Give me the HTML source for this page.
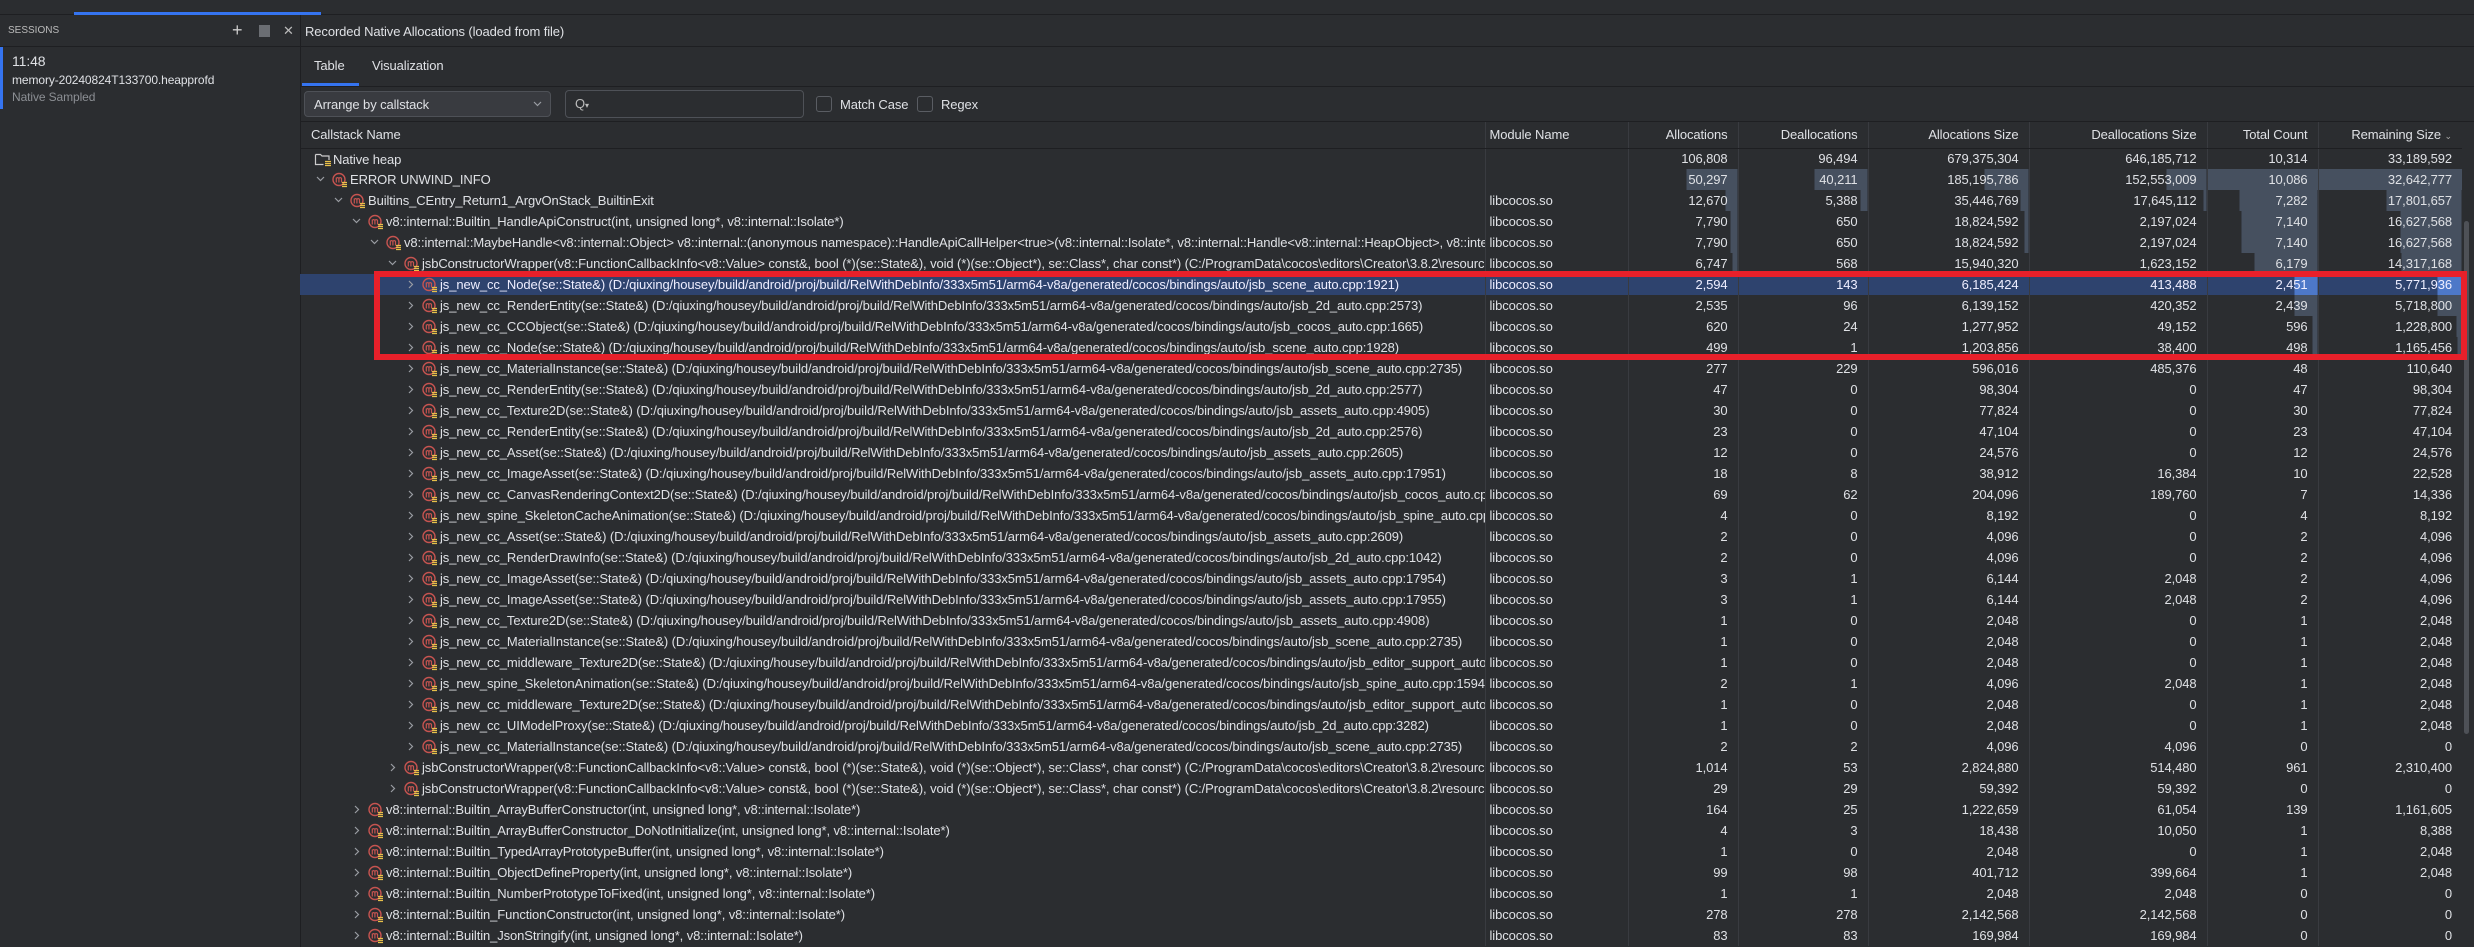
<!DOCTYPE html>
<html><head><meta charset="utf-8">
<style>
*{box-sizing:border-box;margin:0;padding:0}
body{width:2474px;height:947px;background:#2b2d30;color:#dfe1e5;font-family:"Liberation Sans",sans-serif;font-size:13px;letter-spacing:-0.1px;overflow:hidden;position:relative}
.a{position:absolute;white-space:nowrap}
table{position:absolute;left:300px;top:122px;width:2162px;border-collapse:collapse;table-layout:fixed}
td,th{height:21px;padding:0 10px 0 0;text-align:right;font-weight:normal;white-space:nowrap;overflow:hidden;border-left:1px solid #393b40}
th{height:26px;border-bottom:1px solid #1e1f22;color:#dfe1e5}
td:first-child,th:first-child{border-left:none;text-align:left;padding:0;position:relative}
td:nth-child(2),th:nth-child(2){text-align:left;padding-left:4px}
tr.sel td{background:#2e436e;color:#eef}
.n{position:absolute;top:0;height:21px;display:flex;align-items:center;white-space:nowrap}
.n svg{flex:none}
.ch{position:absolute;top:7px}
</style></head><body>
<svg width="0" height="0" style="position:absolute">
<defs>
<symbol id="m" viewBox="0 0 16 16"><circle cx="7" cy="7.5" r="6" fill="none" stroke="#c75450" stroke-width="1.4"/><path d="M4.3 10.5V5.5M4.3 6.3q1.3-1.4 2.6 0V10.5M6.9 6.3q1.3-1.4 2.6 0V10.5" fill="none" stroke="#c75450" stroke-width="1.2"/><path d="M10 10.5h5M10 12.5h5M10 14.5h5" stroke="#e8c04a" stroke-width="1.2"/></symbol>
<symbol id="f" viewBox="0 0 18 16"><path d="M1.5 3.5h5l1.5 1.5h7v4M1.5 3.5v10h8" fill="none" stroke="#ccc" stroke-width="1.2"/><path d="M11 10.5h6M11 12.5h6M11 14.5h6" stroke="#e8c04a" stroke-width="1.2"/></symbol>
<symbol id="d" viewBox="0 0 9 6"><path d="M1 1l3.5 3.5L8 1" fill="none" stroke="#9a9da3" stroke-width="1.2"/></symbol>
<symbol id="r" viewBox="0 0 6 9"><path d="M1 1l3.5 3.5L1 8" fill="none" stroke="#9a9da3" stroke-width="1.2"/></symbol>
</defs></svg>

<div class="a" style="left:0;top:0;width:2474px;height:15px;background:#2b2d30;border-bottom:1px solid #1e1f22"></div>
<div class="a" style="left:74px;top:12px;width:247px;height:3px;background:#3574f0"></div>

<div class="a" style="left:0;top:15px;width:301px;height:932px;border-right:1px solid #1e1f22"></div>
<div class="a" style="left:0;top:46px;width:301px;height:1px;background:#1e1f22"></div>
<div class="a" style="left:8px;top:25px;font-size:10px;color:#bbb;letter-spacing:0">SESSIONS</div>
<div class="a" style="left:232px;top:21px;font-size:18px;color:#ccc;line-height:18px">+</div>
<div class="a" style="left:259px;top:25px;width:11px;height:12px;background:#6b6e73"></div>
<div class="a" style="left:283px;top:23px;font-size:13px;color:#bbb">✕</div>
<div class="a" style="left:0;top:47px;width:3px;height:62px;background:#3574f0"></div>
<div class="a" style="left:12px;top:53px;font-size:14px;color:#dfe1e5">11:48</div>
<div class="a" style="left:12px;top:73px;font-size:12px;color:#dfe1e5">memory-20240824T133700.heapprofd</div>
<div class="a" style="left:12px;top:90px;font-size:12px;color:#8c8f94">Native Sampled</div>

<div class="a" style="left:305px;top:24px;font-size:13px;color:#dfe1e5">Recorded Native Allocations (loaded from file)</div>
<div class="a" style="left:301px;top:46px;width:2173px;height:1px;background:#1e1f22"></div>
<div class="a" style="left:314px;top:58px;font-size:13px">Table</div>
<div class="a" style="left:372px;top:58px;font-size:13px">Visualization</div>
<div class="a" style="left:302px;top:83px;width:57px;height:3px;background:#3574f0"></div>
<div class="a" style="left:301px;top:86px;width:2173px;height:1px;background:#1e1f22"></div>
<div class="a" style="left:304px;top:91px;width:247px;height:26px;background:#393b40;border:1px solid #4e5157;border-radius:4px"></div>
<div class="a" style="left:314px;top:97px;font-size:13px">Arrange by callstack</div>
<svg class="a" style="left:533px;top:101px" width="9" height="6"><use href="#d"/></svg>
<div class="a" style="left:565px;top:90px;width:239px;height:28px;border:1px solid #4e5157;border-radius:4px"></div>
<div class="a" style="left:575px;top:96px;font-size:13px;color:#bbb">Q<span style="font-size:8px">▾</span></div>
<div class="a" style="left:816px;top:96px;width:16px;height:16px;border:1px solid #5a5d63;border-radius:3px"></div>
<div class="a" style="left:840px;top:97px;font-size:13px">Match Case</div>
<div class="a" style="left:917px;top:96px;width:16px;height:16px;border:1px solid #5a5d63;border-radius:3px"></div>
<div class="a" style="left:941px;top:97px;font-size:13px">Regex</div>
<div class="a" style="left:301px;top:121px;width:2173px;height:1px;background:#1e1f22"></div>

<div class="a" style="left:2464px;top:221px;width:5px;height:513px;background:#4e5157;border-radius:3px"></div>

<table>
<colgroup><col style="width:1185px"><col style="width:143px"><col style="width:110px"><col style="width:130px"><col style="width:161px"><col style="width:178px"><col style="width:111px"><col style="width:144px"></colgroup>
<tr><th><span style="padding-left:11px">Callstack Name</span></th><th>Module Name</th><th>Allocations</th><th>Deallocations</th><th>Allocations Size</th><th>Deallocations Size</th><th>Total Count</th><th>Remaining Size <span style="font-size:9px;color:#aaa">⌄</span></th></tr>

<tr><td><div class="n" style="left:14px"><svg width="18" height="16"><use href="#f"/></svg><span style="margin-left:1px">Native heap</span></div></td><td></td><td>106,808</td><td>96,494</td><td>679,375,304</td><td>646,185,712</td><td>10,314</td><td>33,189,592</td></tr>

<tr><td><svg class="ch" style="left:16px" width="9" height="6"><use href="#d"/></svg><div class="n" style="left:32px"><svg width="16" height="16"><use href="#m"/></svg><span style="margin-left:2px">ERROR UNWIND_INFO</span></div></td><td></td><td style="background:linear-gradient(to left,#46505f 51px,transparent 51px)">50,297</td><td style="background:linear-gradient(to left,#46505f 53px,transparent 53px)">40,211</td><td style="background:linear-gradient(to left,#46505f 44px,transparent 44px)">185,195,786</td><td style="background:linear-gradient(to left,#46505f 40px,transparent 40px)">152,553,009</td><td style="background:#46505f">10,086</td><td style="background:#46505f">32,642,777</td></tr>

<tr><td><svg class="ch" style="left:34px" width="9" height="6"><use href="#d"/></svg><div class="n" style="left:50px"><svg width="16" height="16"><use href="#m"/></svg><span style="margin-left:2px">Builtins_CEntry_Return1_ArgvOnStack_BuiltinExit</span></div></td><td>libcocos.so</td><td style="background:linear-gradient(to left,#46505f 12px,transparent 12px)">12,670</td><td style="background:linear-gradient(to left,#46505f 7px,transparent 7px)">5,388</td><td style="background:linear-gradient(to left,#46505f 8px,transparent 8px)">35,446,769</td><td style="background:linear-gradient(to left,#46505f 3px,transparent 3px)">17,645,112</td><td style="background:linear-gradient(to left,#46505f 78px,transparent 78px)">7,282</td><td style="background:linear-gradient(to left,#46505f 75px,transparent 75px)">17,801,657</td></tr>

<tr><td><svg class="ch" style="left:52px" width="9" height="6"><use href="#d"/></svg><div class="n" style="left:68px"><svg width="16" height="16"><use href="#m"/></svg><span style="margin-left:2px">v8::internal::Builtin_HandleApiConstruct(int, unsigned long*, v8::internal::Isolate*)</span></div></td><td>libcocos.so</td><td style="background:linear-gradient(to left,#46505f 7px,transparent 7px)">7,790</td><td>650</td><td style="background:linear-gradient(to left,#46505f 4px,transparent 4px)">18,824,592</td><td>2,197,024</td><td style="background:linear-gradient(to left,#46505f 76px,transparent 76px)">7,140</td><td style="background:linear-gradient(to left,#46505f 61px,transparent 61px)">16,627,568</td></tr>

<tr><td><svg class="ch" style="left:70px" width="9" height="6"><use href="#d"/></svg><div class="n" style="left:86px"><svg width="16" height="16"><use href="#m"/></svg><span style="margin-left:2px">v8::internal::MaybeHandle&lt;v8::internal::Object&gt; v8::internal::(anonymous namespace)::HandleApiCallHelper&lt;true&gt;(v8::internal::Isolate*, v8::internal::Handle&lt;v8::internal::HeapObject&gt;, v8::internal::Handle&lt;v8::internal::FunctionTemplateInfo&gt;)</span></div></td><td>libcocos.so</td><td style="background:linear-gradient(to left,#46505f 7px,transparent 7px)">7,790</td><td>650</td><td style="background:linear-gradient(to left,#46505f 4px,transparent 4px)">18,824,592</td><td>2,197,024</td><td style="background:linear-gradient(to left,#46505f 76px,transparent 76px)">7,140</td><td style="background:linear-gradient(to left,#46505f 61px,transparent 61px)">16,627,568</td></tr>

<tr><td><svg class="ch" style="left:88px" width="9" height="6"><use href="#d"/></svg><div class="n" style="left:104px"><svg width="16" height="16"><use href="#m"/></svg><span style="margin-left:2px">jsbConstructorWrapper(v8::FunctionCallbackInfo&lt;v8::Value&gt; const&amp;, bool (*)(se::State&amp;), void (*)(se::Object*), se::Class*, char const*) (C:/ProgramData\cocos\editors\Creator\3.8.2\resources\resources\3d\engine\native\cocos\bindings\jswrapper\v8\HelperMacros.h)</span></div></td><td>libcocos.so</td><td style="background:linear-gradient(to left,#46505f 5px,transparent 5px)">6,747</td><td>568</td><td>15,940,320</td><td>1,623,152</td><td style="background:linear-gradient(to left,#46505f 63px,transparent 63px)">6,179</td><td style="background:linear-gradient(to left,#46505f 60px,transparent 60px)">14,317,168</td></tr>

<tr class="sel"><td><svg class="ch" style="left:108px;top:6px" width="6" height="9"><use href="#r"/></svg><div class="n" style="left:122px"><svg width="16" height="16"><use href="#m"/></svg><span style="margin-left:2px">js_new_cc_Node(se::State&amp;) (D:/qiuxing/housey/build/android/proj/build/RelWithDebInfo/333x5m51/arm64-v8a/generated/cocos/bindings/auto/jsb_scene_auto.cpp:1921)</span></div></td><td>libcocos.so</td><td>2,594</td><td>143</td><td>6,185,424</td><td>413,488</td><td style="background:linear-gradient(to left,#4d78c8 23px,#2e436e 23px)">2,451</td><td style="background:linear-gradient(to left,#4d78c8 24px,#2e436e 24px)">5,771,936</td></tr>

<tr><td><svg class="ch" style="left:108px;top:6px" width="6" height="9"><use href="#r"/></svg><div class="n" style="left:122px"><svg width="16" height="16"><use href="#m"/></svg><span style="margin-left:2px">js_new_cc_RenderEntity(se::State&amp;) (D:/qiuxing/housey/build/android/proj/build/RelWithDebInfo/333x5m51/arm64-v8a/generated/cocos/bindings/auto/jsb_2d_auto.cpp:2573)</span></div></td><td>libcocos.so</td><td>2,535</td><td>96</td><td>6,139,152</td><td>420,352</td><td style="background:linear-gradient(to left,#46505f 23px,transparent 23px)">2,439</td><td style="background:linear-gradient(to left,#46505f 24px,transparent 24px)">5,718,800</td></tr>

<tr><td><svg class="ch" style="left:108px;top:6px" width="6" height="9"><use href="#r"/></svg><div class="n" style="left:122px"><svg width="16" height="16"><use href="#m"/></svg><span style="margin-left:2px">js_new_cc_CCObject(se::State&amp;) (D:/qiuxing/housey/build/android/proj/build/RelWithDebInfo/333x5m51/arm64-v8a/generated/cocos/bindings/auto/jsb_cocos_auto.cpp:1665)</span></div></td><td>libcocos.so</td><td>620</td><td>24</td><td>1,277,952</td><td>49,152</td><td style="background:linear-gradient(to left,#46505f 5px,transparent 5px)">596</td><td style="background:linear-gradient(to left,#46505f 5px,transparent 5px)">1,228,800</td></tr>

<tr><td><svg class="ch" style="left:108px;top:6px" width="6" height="9"><use href="#r"/></svg><div class="n" style="left:122px"><svg width="16" height="16"><use href="#m"/></svg><span style="margin-left:2px">js_new_cc_Node(se::State&amp;) (D:/qiuxing/housey/build/android/proj/build/RelWithDebInfo/333x5m51/arm64-v8a/generated/cocos/bindings/auto/jsb_scene_auto.cpp:1928)</span></div></td><td>libcocos.so</td><td>499</td><td>1</td><td>1,203,856</td><td>38,400</td><td style="background:linear-gradient(to left,#46505f 5px,transparent 5px)">498</td><td style="background:linear-gradient(to left,#46505f 4px,transparent 4px)">1,165,456</td></tr>

<tr><td><svg class="ch" style="left:108px;top:6px" width="6" height="9"><use href="#r"/></svg><div class="n" style="left:122px"><svg width="16" height="16"><use href="#m"/></svg><span style="margin-left:2px">js_new_cc_MaterialInstance(se::State&amp;) (D:/qiuxing/housey/build/android/proj/build/RelWithDebInfo/333x5m51/arm64-v8a/generated/cocos/bindings/auto/jsb_scene_auto.cpp:2735)</span></div></td><td>libcocos.so</td><td>277</td><td>229</td><td>596,016</td><td>485,376</td><td>48</td><td>110,640</td></tr>

<tr><td><svg class="ch" style="left:108px;top:6px" width="6" height="9"><use href="#r"/></svg><div class="n" style="left:122px"><svg width="16" height="16"><use href="#m"/></svg><span style="margin-left:2px">js_new_cc_RenderEntity(se::State&amp;) (D:/qiuxing/housey/build/android/proj/build/RelWithDebInfo/333x5m51/arm64-v8a/generated/cocos/bindings/auto/jsb_2d_auto.cpp:2577)</span></div></td><td>libcocos.so</td><td>47</td><td>0</td><td>98,304</td><td>0</td><td>47</td><td>98,304</td></tr>

<tr><td><svg class="ch" style="left:108px;top:6px" width="6" height="9"><use href="#r"/></svg><div class="n" style="left:122px"><svg width="16" height="16"><use href="#m"/></svg><span style="margin-left:2px">js_new_cc_Texture2D(se::State&amp;) (D:/qiuxing/housey/build/android/proj/build/RelWithDebInfo/333x5m51/arm64-v8a/generated/cocos/bindings/auto/jsb_assets_auto.cpp:4905)</span></div></td><td>libcocos.so</td><td>30</td><td>0</td><td>77,824</td><td>0</td><td>30</td><td>77,824</td></tr>

<tr><td><svg class="ch" style="left:108px;top:6px" width="6" height="9"><use href="#r"/></svg><div class="n" style="left:122px"><svg width="16" height="16"><use href="#m"/></svg><span style="margin-left:2px">js_new_cc_RenderEntity(se::State&amp;) (D:/qiuxing/housey/build/android/proj/build/RelWithDebInfo/333x5m51/arm64-v8a/generated/cocos/bindings/auto/jsb_2d_auto.cpp:2576)</span></div></td><td>libcocos.so</td><td>23</td><td>0</td><td>47,104</td><td>0</td><td>23</td><td>47,104</td></tr>

<tr><td><svg class="ch" style="left:108px;top:6px" width="6" height="9"><use href="#r"/></svg><div class="n" style="left:122px"><svg width="16" height="16"><use href="#m"/></svg><span style="margin-left:2px">js_new_cc_Asset(se::State&amp;) (D:/qiuxing/housey/build/android/proj/build/RelWithDebInfo/333x5m51/arm64-v8a/generated/cocos/bindings/auto/jsb_assets_auto.cpp:2605)</span></div></td><td>libcocos.so</td><td>12</td><td>0</td><td>24,576</td><td>0</td><td>12</td><td>24,576</td></tr>

<tr><td><svg class="ch" style="left:108px;top:6px" width="6" height="9"><use href="#r"/></svg><div class="n" style="left:122px"><svg width="16" height="16"><use href="#m"/></svg><span style="margin-left:2px">js_new_cc_ImageAsset(se::State&amp;) (D:/qiuxing/housey/build/android/proj/build/RelWithDebInfo/333x5m51/arm64-v8a/generated/cocos/bindings/auto/jsb_assets_auto.cpp:17951)</span></div></td><td>libcocos.so</td><td>18</td><td>8</td><td>38,912</td><td>16,384</td><td>10</td><td>22,528</td></tr>

<tr><td><svg class="ch" style="left:108px;top:6px" width="6" height="9"><use href="#r"/></svg><div class="n" style="left:122px"><svg width="16" height="16"><use href="#m"/></svg><span style="margin-left:2px">js_new_cc_CanvasRenderingContext2D(se::State&amp;) (D:/qiuxing/housey/build/android/proj/build/RelWithDebInfo/333x5m51/arm64-v8a/generated/cocos/bindings/auto/jsb_cocos_auto.cpp:23417)</span></div></td><td>libcocos.so</td><td>69</td><td>62</td><td>204,096</td><td>189,760</td><td>7</td><td>14,336</td></tr>

<tr><td><svg class="ch" style="left:108px;top:6px" width="6" height="9"><use href="#r"/></svg><div class="n" style="left:122px"><svg width="16" height="16"><use href="#m"/></svg><span style="margin-left:2px">js_new_spine_SkeletonCacheAnimation(se::State&amp;) (D:/qiuxing/housey/build/android/proj/build/RelWithDebInfo/333x5m51/arm64-v8a/generated/cocos/bindings/auto/jsb_spine_auto.cpp:17031)</span></div></td><td>libcocos.so</td><td>4</td><td>0</td><td>8,192</td><td>0</td><td>4</td><td>8,192</td></tr>

<tr><td><svg class="ch" style="left:108px;top:6px" width="6" height="9"><use href="#r"/></svg><div class="n" style="left:122px"><svg width="16" height="16"><use href="#m"/></svg><span style="margin-left:2px">js_new_cc_Asset(se::State&amp;) (D:/qiuxing/housey/build/android/proj/build/RelWithDebInfo/333x5m51/arm64-v8a/generated/cocos/bindings/auto/jsb_assets_auto.cpp:2609)</span></div></td><td>libcocos.so</td><td>2</td><td>0</td><td>4,096</td><td>0</td><td>2</td><td>4,096</td></tr>

<tr><td><svg class="ch" style="left:108px;top:6px" width="6" height="9"><use href="#r"/></svg><div class="n" style="left:122px"><svg width="16" height="16"><use href="#m"/></svg><span style="margin-left:2px">js_new_cc_RenderDrawInfo(se::State&amp;) (D:/qiuxing/housey/build/android/proj/build/RelWithDebInfo/333x5m51/arm64-v8a/generated/cocos/bindings/auto/jsb_2d_auto.cpp:1042)</span></div></td><td>libcocos.so</td><td>2</td><td>0</td><td>4,096</td><td>0</td><td>2</td><td>4,096</td></tr>

<tr><td><svg class="ch" style="left:108px;top:6px" width="6" height="9"><use href="#r"/></svg><div class="n" style="left:122px"><svg width="16" height="16"><use href="#m"/></svg><span style="margin-left:2px">js_new_cc_ImageAsset(se::State&amp;) (D:/qiuxing/housey/build/android/proj/build/RelWithDebInfo/333x5m51/arm64-v8a/generated/cocos/bindings/auto/jsb_assets_auto.cpp:17954)</span></div></td><td>libcocos.so</td><td>3</td><td>1</td><td>6,144</td><td>2,048</td><td>2</td><td>4,096</td></tr>

<tr><td><svg class="ch" style="left:108px;top:6px" width="6" height="9"><use href="#r"/></svg><div class="n" style="left:122px"><svg width="16" height="16"><use href="#m"/></svg><span style="margin-left:2px">js_new_cc_ImageAsset(se::State&amp;) (D:/qiuxing/housey/build/android/proj/build/RelWithDebInfo/333x5m51/arm64-v8a/generated/cocos/bindings/auto/jsb_assets_auto.cpp:17955)</span></div></td><td>libcocos.so</td><td>3</td><td>1</td><td>6,144</td><td>2,048</td><td>2</td><td>4,096</td></tr>

<tr><td><svg class="ch" style="left:108px;top:6px" width="6" height="9"><use href="#r"/></svg><div class="n" style="left:122px"><svg width="16" height="16"><use href="#m"/></svg><span style="margin-left:2px">js_new_cc_Texture2D(se::State&amp;) (D:/qiuxing/housey/build/android/proj/build/RelWithDebInfo/333x5m51/arm64-v8a/generated/cocos/bindings/auto/jsb_assets_auto.cpp:4908)</span></div></td><td>libcocos.so</td><td>1</td><td>0</td><td>2,048</td><td>0</td><td>1</td><td>2,048</td></tr>

<tr><td><svg class="ch" style="left:108px;top:6px" width="6" height="9"><use href="#r"/></svg><div class="n" style="left:122px"><svg width="16" height="16"><use href="#m"/></svg><span style="margin-left:2px">js_new_cc_MaterialInstance(se::State&amp;) (D:/qiuxing/housey/build/android/proj/build/RelWithDebInfo/333x5m51/arm64-v8a/generated/cocos/bindings/auto/jsb_scene_auto.cpp:2735)</span></div></td><td>libcocos.so</td><td>1</td><td>0</td><td>2,048</td><td>0</td><td>1</td><td>2,048</td></tr>

<tr><td><svg class="ch" style="left:108px;top:6px" width="6" height="9"><use href="#r"/></svg><div class="n" style="left:122px"><svg width="16" height="16"><use href="#m"/></svg><span style="margin-left:2px">js_new_cc_middleware_Texture2D(se::State&amp;) (D:/qiuxing/housey/build/android/proj/build/RelWithDebInfo/333x5m51/arm64-v8a/generated/cocos/bindings/auto/jsb_editor_support_auto.cpp:301)</span></div></td><td>libcocos.so</td><td>1</td><td>0</td><td>2,048</td><td>0</td><td>1</td><td>2,048</td></tr>

<tr><td><svg class="ch" style="left:108px;top:6px" width="6" height="9"><use href="#r"/></svg><div class="n" style="left:122px"><svg width="16" height="16"><use href="#m"/></svg><span style="margin-left:2px">js_new_spine_SkeletonAnimation(se::State&amp;) (D:/qiuxing/housey/build/android/proj/build/RelWithDebInfo/333x5m51/arm64-v8a/generated/cocos/bindings/auto/jsb_spine_auto.cpp:15941)</span></div></td><td>libcocos.so</td><td>2</td><td>1</td><td>4,096</td><td>2,048</td><td>1</td><td>2,048</td></tr>

<tr><td><svg class="ch" style="left:108px;top:6px" width="6" height="9"><use href="#r"/></svg><div class="n" style="left:122px"><svg width="16" height="16"><use href="#m"/></svg><span style="margin-left:2px">js_new_cc_middleware_Texture2D(se::State&amp;) (D:/qiuxing/housey/build/android/proj/build/RelWithDebInfo/333x5m51/arm64-v8a/generated/cocos/bindings/auto/jsb_editor_support_auto.cpp:302)</span></div></td><td>libcocos.so</td><td>1</td><td>0</td><td>2,048</td><td>0</td><td>1</td><td>2,048</td></tr>

<tr><td><svg class="ch" style="left:108px;top:6px" width="6" height="9"><use href="#r"/></svg><div class="n" style="left:122px"><svg width="16" height="16"><use href="#m"/></svg><span style="margin-left:2px">js_new_cc_UIModelProxy(se::State&amp;) (D:/qiuxing/housey/build/android/proj/build/RelWithDebInfo/333x5m51/arm64-v8a/generated/cocos/bindings/auto/jsb_2d_auto.cpp:3282)</span></div></td><td>libcocos.so</td><td>1</td><td>0</td><td>2,048</td><td>0</td><td>1</td><td>2,048</td></tr>

<tr><td><svg class="ch" style="left:108px;top:6px" width="6" height="9"><use href="#r"/></svg><div class="n" style="left:122px"><svg width="16" height="16"><use href="#m"/></svg><span style="margin-left:2px">js_new_cc_MaterialInstance(se::State&amp;) (D:/qiuxing/housey/build/android/proj/build/RelWithDebInfo/333x5m51/arm64-v8a/generated/cocos/bindings/auto/jsb_scene_auto.cpp:2735)</span></div></td><td>libcocos.so</td><td>2</td><td>2</td><td>4,096</td><td>4,096</td><td>0</td><td>0</td></tr>

<tr><td><svg class="ch" style="left:90px;top:6px" width="6" height="9"><use href="#r"/></svg><div class="n" style="left:104px"><svg width="16" height="16"><use href="#m"/></svg><span style="margin-left:2px">jsbConstructorWrapper(v8::FunctionCallbackInfo&lt;v8::Value&gt; const&amp;, bool (*)(se::State&amp;), void (*)(se::Object*), se::Class*, char const*) (C:/ProgramData\cocos\editors\Creator\3.8.2\resources\resources\3d\engine\native\cocos\bindings\jswrapper\v8\HelperMacros.h)</span></div></td><td>libcocos.so</td><td>1,014</td><td>53</td><td>2,824,880</td><td>514,480</td><td>961</td><td>2,310,400</td></tr>

<tr><td><svg class="ch" style="left:90px;top:6px" width="6" height="9"><use href="#r"/></svg><div class="n" style="left:104px"><svg width="16" height="16"><use href="#m"/></svg><span style="margin-left:2px">jsbConstructorWrapper(v8::FunctionCallbackInfo&lt;v8::Value&gt; const&amp;, bool (*)(se::State&amp;), void (*)(se::Object*), se::Class*, char const*) (C:/ProgramData\cocos\editors\Creator\3.8.2\resources\resources\3d\engine\native\cocos\bindings\jswrapper\v8\HelperMacros.h)</span></div></td><td>libcocos.so</td><td>29</td><td>29</td><td>59,392</td><td>59,392</td><td>0</td><td>0</td></tr>

<tr><td><svg class="ch" style="left:54px;top:6px" width="6" height="9"><use href="#r"/></svg><div class="n" style="left:68px"><svg width="16" height="16"><use href="#m"/></svg><span style="margin-left:2px">v8::internal::Builtin_ArrayBufferConstructor(int, unsigned long*, v8::internal::Isolate*)</span></div></td><td>libcocos.so</td><td>164</td><td>25</td><td>1,222,659</td><td>61,054</td><td>139</td><td>1,161,605</td></tr>

<tr><td><svg class="ch" style="left:54px;top:6px" width="6" height="9"><use href="#r"/></svg><div class="n" style="left:68px"><svg width="16" height="16"><use href="#m"/></svg><span style="margin-left:2px">v8::internal::Builtin_ArrayBufferConstructor_DoNotInitialize(int, unsigned long*, v8::internal::Isolate*)</span></div></td><td>libcocos.so</td><td>4</td><td>3</td><td>18,438</td><td>10,050</td><td>1</td><td>8,388</td></tr>

<tr><td><svg class="ch" style="left:54px;top:6px" width="6" height="9"><use href="#r"/></svg><div class="n" style="left:68px"><svg width="16" height="16"><use href="#m"/></svg><span style="margin-left:2px">v8::internal::Builtin_TypedArrayPrototypeBuffer(int, unsigned long*, v8::internal::Isolate*)</span></div></td><td>libcocos.so</td><td>1</td><td>0</td><td>2,048</td><td>0</td><td>1</td><td>2,048</td></tr>

<tr><td><svg class="ch" style="left:54px;top:6px" width="6" height="9"><use href="#r"/></svg><div class="n" style="left:68px"><svg width="16" height="16"><use href="#m"/></svg><span style="margin-left:2px">v8::internal::Builtin_ObjectDefineProperty(int, unsigned long*, v8::internal::Isolate*)</span></div></td><td>libcocos.so</td><td>99</td><td>98</td><td>401,712</td><td>399,664</td><td>1</td><td>2,048</td></tr>

<tr><td><svg class="ch" style="left:54px;top:6px" width="6" height="9"><use href="#r"/></svg><div class="n" style="left:68px"><svg width="16" height="16"><use href="#m"/></svg><span style="margin-left:2px">v8::internal::Builtin_NumberPrototypeToFixed(int, unsigned long*, v8::internal::Isolate*)</span></div></td><td>libcocos.so</td><td>1</td><td>1</td><td>2,048</td><td>2,048</td><td>0</td><td>0</td></tr>

<tr><td><svg class="ch" style="left:54px;top:6px" width="6" height="9"><use href="#r"/></svg><div class="n" style="left:68px"><svg width="16" height="16"><use href="#m"/></svg><span style="margin-left:2px">v8::internal::Builtin_FunctionConstructor(int, unsigned long*, v8::internal::Isolate*)</span></div></td><td>libcocos.so</td><td>278</td><td>278</td><td>2,142,568</td><td>2,142,568</td><td>0</td><td>0</td></tr>

<tr><td><svg class="ch" style="left:54px;top:6px" width="6" height="9"><use href="#r"/></svg><div class="n" style="left:68px"><svg width="16" height="16"><use href="#m"/></svg><span style="margin-left:2px">v8::internal::Builtin_JsonStringify(int, unsigned long*, v8::internal::Isolate*)</span></div></td><td>libcocos.so</td><td>83</td><td>83</td><td>169,984</td><td>169,984</td><td>0</td><td>0</td></tr>
</table>

<div class="a" style="left:374px;top:271px;width:2093px;height:89px;border:6px solid #e8202a"></div>
</body></html>
